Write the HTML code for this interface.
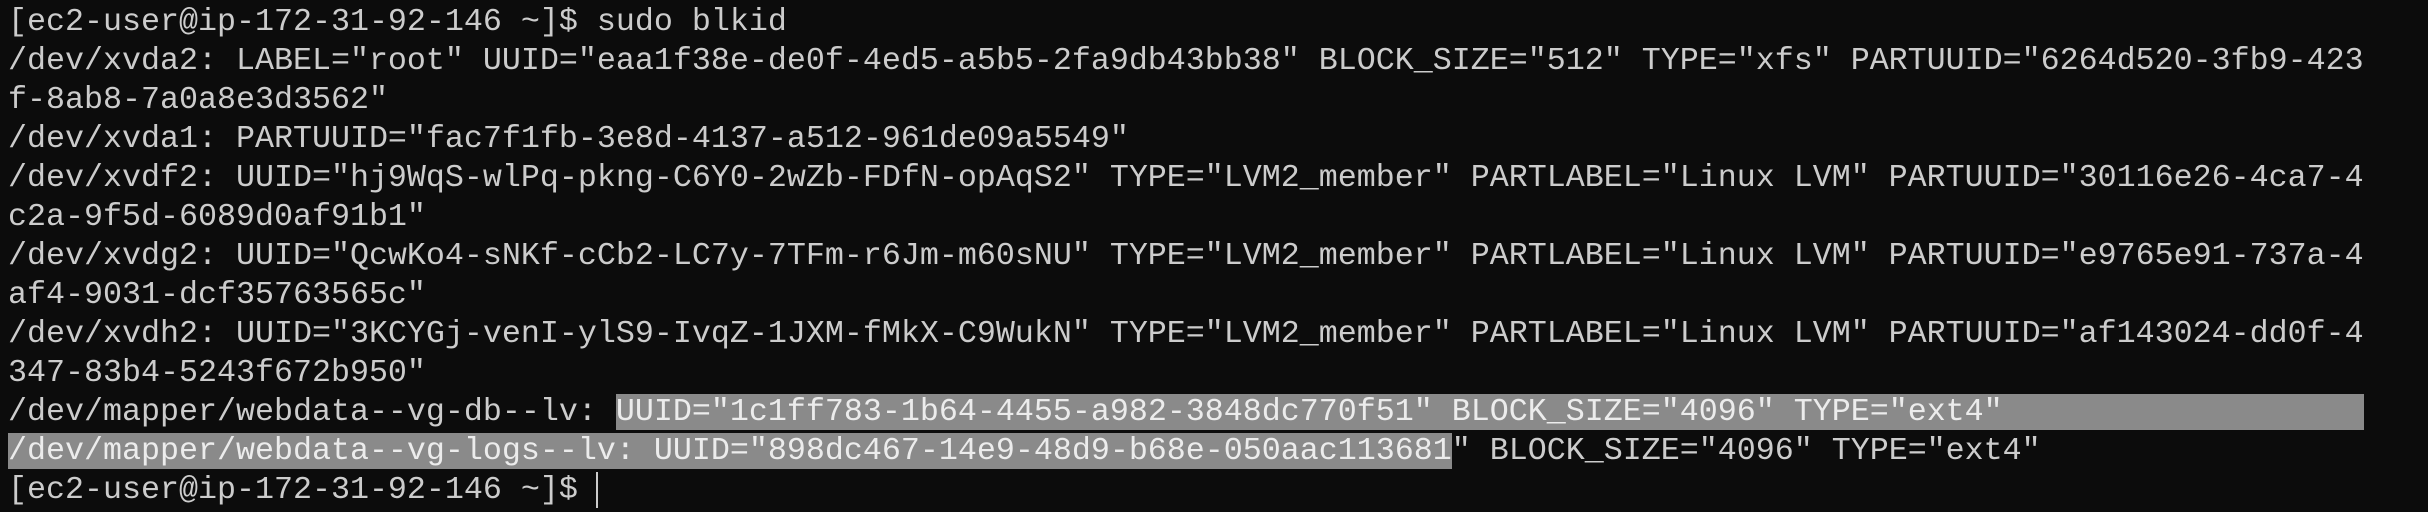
<!DOCTYPE html>
<html><head><meta charset="utf-8"><style>
html,body{margin:0;padding:0;background:#0c0c0c;width:2428px;height:512px;overflow:hidden}
pre{margin:0;position:absolute;left:8px;top:3px;font-family:"Liberation Mono","DejaVu Sans Mono",monospace;font-size:31.67px;line-height:39px;color:#cccccc;white-space:pre}
.s{background:#8a8a8a;color:#ececec}
.c{display:inline-block;width:2px;height:36px;background:#cccccc;vertical-align:middle;margin-left:-1px}
</style></head><body>
<pre>[ec2-user@ip-172-31-92-146 ~]$ sudo blkid
/dev/xvda2: LABEL="root" UUID="eaa1f38e-de0f-4ed5-a5b5-2fa9db43bb38" BLOCK_SIZE="512" TYPE="xfs" PARTUUID="6264d520-3fb9-423
f-8ab8-7a0a8e3d3562"
/dev/xvda1: PARTUUID="fac7f1fb-3e8d-4137-a512-961de09a5549"
/dev/xvdf2: UUID="hj9WqS-wlPq-pkng-C6Y0-2wZb-FDfN-opAqS2" TYPE="LVM2_member" PARTLABEL="Linux LVM" PARTUUID="30116e26-4ca7-4
c2a-9f5d-6089d0af91b1"
/dev/xvdg2: UUID="QcwKo4-sNKf-cCb2-LC7y-7TFm-r6Jm-m60sNU" TYPE="LVM2_member" PARTLABEL="Linux LVM" PARTUUID="e9765e91-737a-4
af4-9031-dcf35763565c"
/dev/xvdh2: UUID="3KCYGj-venI-ylS9-IvqZ-1JXM-fMkX-C9WukN" TYPE="LVM2_member" PARTLABEL="Linux LVM" PARTUUID="af143024-dd0f-4
347-83b4-5243f672b950"
/dev/mapper/webdata--vg-db--lv: <span class="s">UUID="1c1ff783-1b64-4455-a982-3848dc770f51" BLOCK_SIZE="4096" TYPE="ext4"                   </span>
<span class="s">/dev/mapper/webdata--vg-logs--lv: UUID="898dc467-14e9-48d9-b68e-050aac113681</span>" BLOCK_SIZE="4096" TYPE="ext4"
[ec2-user@ip-172-31-92-146 ~]$ <span class="c"></span></pre>
</body></html>
